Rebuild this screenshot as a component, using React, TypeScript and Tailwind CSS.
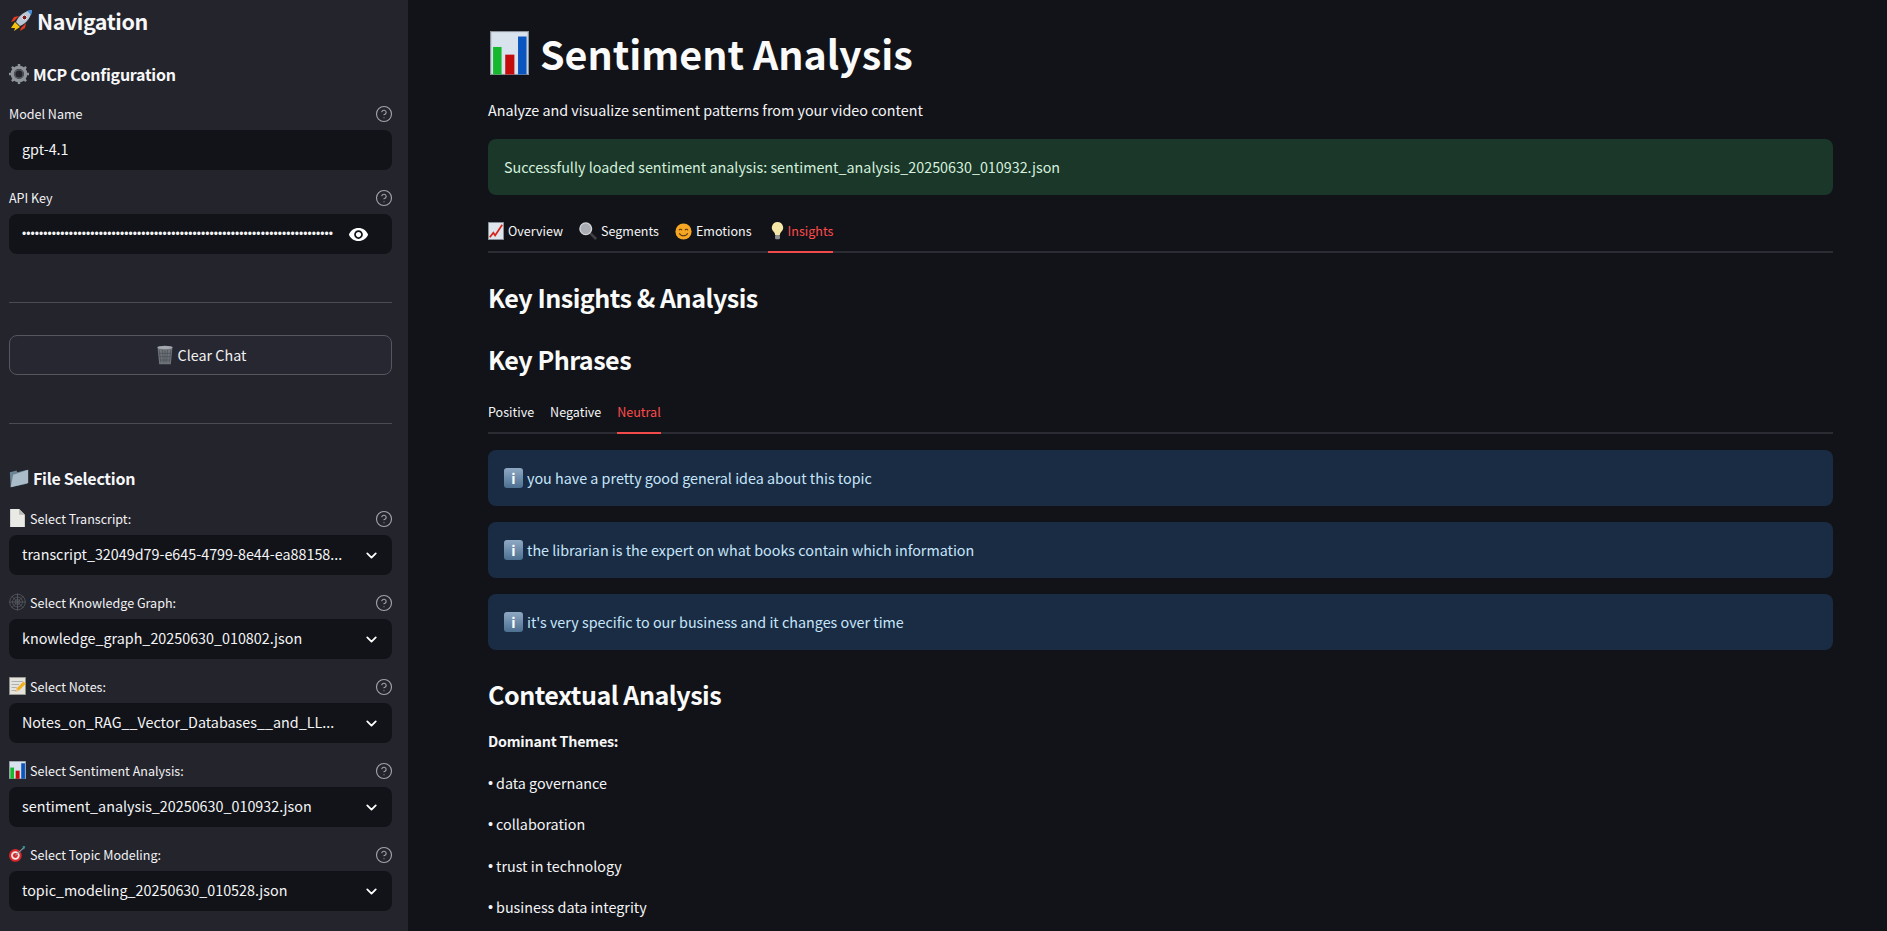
import { ChevronDown, CircleHelp } from "lucide-react";
import type { ReactNode } from "react";

// emoji are drawn by hand, the sandbox has no colour emoji font
function ChartIcon({ className }: { className: string }) {
  return (
    <svg viewBox="0 0 32 40" preserveAspectRatio="none" className={className}>
      <rect x="0.5" y="0.5" width="31" height="39" fill="#d9e3ee" stroke="#8b929b" />
      <rect x="2.500" y="14.500" width="7" height="25" fill="#16b82e" />
      <rect x="12.500" y="21.500" width="7.500" height="18" fill="#c40c0c" />
      <rect x="23" y="5" width="7" height="34.500" fill="#0b55c0" />
    </svg>
  );
}

function RocketIcon({ className }: { className: string }) {
  return (
    <svg viewBox="0 0 24 24" className={className}>
      <path d="M2 19l4-6 5 5-6 4 1-3z" fill="#f4c20d" />
      <path d="M5 12l-3 1 3-5 5-1zM12 19l-1 3 5-3 1-5z" fill="#e8381f" />
      <path d="M7 13C10 6 16 2 23 1c-1 7-5 13-12 16z" fill="#b9c6d6" />
      <path d="M18 1.800l5-.8-.8 5z" fill="#3f8fe0" />
      <circle cx="15.500" cy="8.500" r="2.400" fill="#7b1d1d" stroke="#dfe7ee" />
    </svg>
  );
}

function GearIcon({ className }: { className: string }) {
  return (
    <svg viewBox="0 0 24 24" className={className}>
      <circle cx="12" cy="12" r="8" fill="none" stroke="#8f949b" strokeWidth="4" />
      <g stroke="#8f949b" strokeWidth="3">
        <path d="M12 0v5M12 19v5M0 12h5M19 12h5M3.500 3.500l3.500 3.500M17 17l3.500 3.500M20.500 3.500L17 7M7 17l-3.500 3.500" />
      </g>
      <circle cx="12" cy="12" r="5" fill="none" stroke="#5a5e65" strokeWidth="1.500" />
    </svg>
  );
}

function TrashIcon({ className }: { className: string }) {
  return (
    <svg viewBox="0 0 20 24" className={className}>
      <path d="M1 2h18l-2 21H3z" fill="#6e737a" />
      <path d="M3 6l2 15M7 6l1 15M10 6v15M13 6l-1 15M17 6l-2 15M3 10h14M3.500 14h13M4 18h12" stroke="#4a4e55" strokeWidth="0.800" />
      <ellipse cx="10" cy="3" rx="9" ry="2" fill="#a5a9af" />
    </svg>
  );
}

function FolderIcon({ className }: { className: string }) {
  return (
    <svg viewBox="0 0 24 24" className={className}>
      <path d="M1 5l8-2 1 2 12-3v17L2 23z" fill="#6c8494" />
      <path d="M5 8l18-6v16L2 23z" fill="#a9bcc8" />
    </svg>
  );
}

function PageIcon({ className }: { className: string }) {
  return (
    <svg viewBox="0 0 20 22" className={className}>
      <path d="M1 0h11l7 7v15H1z" fill="#e9e9e6" />
      <path d="M12 0l7 7h-7z" fill="#b9bab6" />
    </svg>
  );
}

function WebIcon({ className }: { className: string }) {
  return (
    <svg viewBox="0 0 24 24" className={className} fill="none" stroke="#5e6168" strokeWidth="1">
      <path d="M12 0v24M0 12h24M3.500 3.500l17 17M20.500 3.500l-17 17" />
      <circle cx="12" cy="12" r="3.500" />
      <circle cx="12" cy="12" r="7" />
      <circle cx="12" cy="12" r="11" />
    </svg>
  );
}

function MemoIcon({ className }: { className: string }) {
  return (
    <svg viewBox="0 0 22 24" className={className}>
      <rect x="0.500" y="0.500" width="21" height="23" fill="#e4e4dc" stroke="#9a9a94" />
      <path d="M3 6h15M3 10h10M3 14h7M3 18h6" stroke="#9aa0a8" strokeWidth="1" />
      <path d="M8 20l2-5 9-9 3 3-9 9z" fill="#f2b01e" />
      <path d="M8 20l2-5 3 3z" fill="#e8c79c" />
    </svg>
  );
}

function DartIcon({ className }: { className: string }) {
  return (
    <svg viewBox="0 0 24 24" className={className}>
      <circle cx="9" cy="14" r="9" fill="#d8262c" />
      <circle cx="9" cy="14" r="6" fill="#f3e7e4" />
      <circle cx="9" cy="14" r="3.500" fill="#d8262c" />
      <path d="M9 14L21 3" stroke="#8aa0a8" strokeWidth="1.500" />
      <path d="M19 1l4 0-2 5z" fill="#3f9fa8" />
    </svg>
  );
}

function TrendIcon({ className }: { className: string }) {
  return (
    <svg viewBox="0 0 18 20" className={className}>
      <rect x="0.500" y="0.500" width="17" height="19" fill="#dfe5ec" stroke="#8b929b" />
      <path d="M2 17l4-5 2 3 8-12" fill="none" stroke="#d4261f" strokeWidth="2" />
    </svg>
  );
}

function SearchIcon({ className }: { className: string }) {
  return (
    <svg viewBox="0 0 20 20" className={className}>
      <path d="M11 11l8 8" stroke="#3d3f44" strokeWidth="3" />
      <circle cx="7.500" cy="7.500" r="6.500" fill="#a9adb3" stroke="#d3d5d8" strokeWidth="1.500" />
    </svg>
  );
}

function SmileIcon({ className }: { className: string }) {
  return (
    <svg viewBox="0 0 20 20" className={className}>
      <circle cx="10" cy="10" r="9.500" fill="#f5a623" />
      <path d="M4.800 8.500c.6-1.600 2.800-1.600 3.400 0M11.800 8.500c.6-1.600 2.800-1.600 3.400 0" fill="none" stroke="#5b3410" strokeWidth="1.200" />
      <path d="M5 12c2 4 8 4 10 0" fill="none" stroke="#5b3410" strokeWidth="1.200" />
    </svg>
  );
}

function BulbIcon({ className }: { className: string }) {
  return (
    <svg viewBox="0 0 16 22" className={className}>
      <path d="M8 0a7 7 0 0 1 4 12.700c-.8.800-1 1.800-1 3.300H5c0-1.500-.2-2.500-1-3.300A7 7 0 0 1 8 0z" fill="#f6e7a8" />
      <rect x="5" y="16" width="6" height="5" rx="1" fill="#8d8f92" />
    </svg>
  );
}

function EyeIcon() {
  return (
    <svg viewBox="0 0 24 24" className="h-[21px] w-[21px] shrink-0" fill="#ffffff">
      <path d="M12 4.500C7 4.500 2.730 7.610 1 12c1.730 4.390 6 7.500 11 7.500s9.270-3.110 11-7.500c-1.730-4.390-6-7.500-11-7.500zM12 17c-2.760 0-5-2.240-5-5s2.240-5 5-5 5 2.240 5 5-2.240 5-5 5zm0-8c-1.660 0-3 1.340-3 3s1.340 3 3 3 3-1.340 3-3-1.340-3-3-3z" />
    </svg>
  );
}

function InfoIcon() {
  return (
    <span className="flex h-[20px] w-[19px] shrink-0 items-center justify-center rounded-[3px] bg-gradient-to-b from-[#8fa9c4] to-[#4d7091] text-[14px] leading-none font-semibold text-white">
      i
    </span>
  );
}

const labelIcon = "w-[17px] h-[18px] shrink-0 -mt-[2px]";

const files = [
  { icon: <PageIcon className={labelIcon} />, label: "Select Transcript:", value: "transcript_32049d79-e645-4799-8e44-ea88158..." },
  { icon: <WebIcon className={labelIcon} />, label: "Select Knowledge Graph:", value: "knowledge_graph_20250630_010802.json" },
  { icon: <MemoIcon className={labelIcon} />, label: "Select Notes:", value: "Notes_on_RAG__Vector_Databases__and_LL..." },
  { icon: <ChartIcon className={labelIcon} />, label: "Select Sentiment Analysis:", value: "sentiment_analysis_20250630_010932.json" },
  { icon: <DartIcon className={labelIcon} />, label: "Select Topic Modeling:", value: "topic_modeling_20250630_010528.json" },
];

const tabs = [
  { icon: <TrendIcon className="w-[16px] h-[18px]" />, label: "Overview" },
  { icon: <SearchIcon className="w-[18px] h-[18px]" />, label: "Segments" },
  { icon: <SmileIcon className="w-[17px] h-[17px]" />, label: "Emotions" },
  { icon: <BulbIcon className="ml-[3px] w-[13px] h-[18px]" />, label: "Insights", active: true },
];

const phrases = [
  "you have a pretty good general idea about this topic",
  "the librarian is the expert on what books contain which information",
  "it's very specific to our business and it changes over time",
];

const themes = ["data governance", "collaboration", "trust in technology", "business data integrity"];

function FieldLabel({ children }: { children: ReactNode }) {
  return (
    <div className="flex h-[20px] items-center justify-between pt-[2px] text-[12.540px] text-[#f2f2f4]">
      <div className="flex items-center gap-[4px]">{children}</div>
      <CircleHelp className="-mr-[1px] h-[18px] w-[18px] text-[#a3a5ab]" strokeWidth={1.5} />
    </div>
  );
}

function SelectBox({ value }: { value: string }) {
  return (
    <div className="mt-[7px] flex h-[40px] items-center justify-between rounded-lg bg-[#111318] pr-[12px] pb-[2px] pl-[13px] text-[14.340px] text-[#f5f5f7]">
      <span className="truncate">{value}</span>
      <ChevronDown className="mt-[2px] h-[17px] w-[17px] shrink-0 text-white" strokeWidth={2.5} />
    </div>
  );
}

function Sidebar() {
  return (
    <aside className="h-full w-[408px] shrink-0 overflow-hidden bg-[#23242c] pr-[16px] pl-[9px]">
      <h2 className="mt-[5px] flex h-[32px] items-center gap-[4px] text-[21.500px] font-bold tracking-[-0.45px] text-[#f7f7f9]">
        <RocketIcon className="h-[24px] w-[24px]" />
        Navigation
      </h2>
      <h3 className="mt-[21px] flex h-[32px] items-center gap-[4px] text-[16px] font-bold tracking-[-0.27px] text-[#f7f7f9]">
        <GearIcon className="h-[20px] w-[20px]" />
        MCP Configuration
      </h3>
      <div className="mt-[13px]">
        <FieldLabel>Model Name</FieldLabel>
        <div className="mt-[7px] flex h-[40px] items-center rounded-lg bg-[#111318] px-[13px] pb-[2px] text-[14.340px] text-[#f5f5f7]">
          gpt-4.1
        </div>
      </div>
      <div className="mt-[17px]">
        <FieldLabel>API Key</FieldLabel>
        <div className="mt-[7px] flex h-[40px] items-center justify-between rounded-lg bg-[#111318] pr-[23px] pl-[13px] text-[#f5f5f7]">
          <span className="[font-family:'Liberation_Sans',sans-serif] text-[12px] leading-none tracking-[0.06px] whitespace-nowrap">{"•".repeat(73)}</span>
          <EyeIcon />
        </div>
      </div>
      <hr className="mt-[48px] border-[#4a4b53]" />
      <button className="mt-[32px] flex h-[40px] w-full items-center justify-center gap-[3px] rounded-lg border border-[#55565e] bg-[#262730] text-[14.340px] text-[#f2f2f4]">
        <TrashIcon className="h-[20px] w-[20px]" />
        Clear Chat
      </button>
      <hr className="mt-[48px] border-[#4a4b53]" />
      <h3 className="mt-[38px] flex h-[32px] items-center gap-[4px] text-[16px] font-bold tracking-[-0.27px] text-[#f7f7f9]">
        <FolderIcon className="h-[20px] w-[20px]" />
        File Selection
      </h3>
      <div className="mt-[14px] flex flex-col gap-[17px]">
        {files.map((f) => (
          <div key={f.label}>
            <FieldLabel>
              {f.icon}
              {f.label}
            </FieldLabel>
            <SelectBox value={f.value} />
          </div>
        ))}
      </div>
    </aside>
  );
}

function Alert({ className, children }: { className: string; children: ReactNode }) {
  return <div className={`flex h-[56px] items-center gap-[4px] rounded-lg px-[16px] text-[14.340px] ${className}`}>{children}</div>;
}

function Main() {
  return (
    <main className="h-full min-w-0 flex-1 overflow-hidden pr-[54px] pl-[80px] text-[#f5f5f7]">
      <h1 className="mt-[26px] flex h-[54px] items-center gap-[11px] text-[39.400px] font-bold text-[#fafafa]">
        <ChartIcon className="ml-[2px] h-[44px] w-[39px]" />
        Sentiment Analysis
      </h1>
      <p className="mt-[17px] h-[26px] text-[14.340px] leading-[26px]">Analyze and visualize sentiment patterns from your video content</p>
      <Alert className="mt-[16px] bg-[#1a3729] pb-[1px] text-[#d5f0dd]">Successfully loaded sentiment analysis: sentiment_analysis_20250630_010932.json</Alert>

      {/* main tabs */}
      <div className="mt-[16px] flex h-[42px] gap-[16px] border-b-2 border-[#2a2b33]">
        {tabs.map((t) => (
          <div
            key={t.label}
            className={`-mb-[2px] flex items-center gap-[4px] border-b-2 text-[12.540px] ${t.active ? "border-[#f04a4a] text-[#ff4b4b]" : "border-transparent"}`}
          >
            {t.icon}
            {t.label}
          </div>
        ))}
      </div>

      <h2 className="mt-[24px] h-[40px] text-[25.100px] leading-[40px] font-semibold tracking-[-0.5px] text-[#fafafa]">Key Insights &amp; Analysis</h2>
      <h2 className="mt-[22px] h-[40px] text-[25.100px] leading-[40px] font-semibold tracking-[-0.5px] text-[#fafafa]">Key Phrases</h2>

      <div className="mt-[15px] flex h-[40px] gap-[16px] border-b-2 border-[#2a2b33]">
        {["Positive", "Negative", "Neutral"].map((t) => (
          <div
            key={t}
            className={`-mb-[2px] flex items-center border-b-2 pb-[2px] text-[12.540px] ${t === "Neutral" ? "border-[#f04a4a] text-[#ff4b4b]" : "border-transparent"}`}
          >
            {t}
          </div>
        ))}
      </div>

      <div className="mt-[16px] flex flex-col gap-[16px]">
        {phrases.map((p) => (
          <Alert key={p} className="bg-[#1a2c44] text-[#c7e6fb]">
            <InfoIcon />
            {p}
          </Alert>
        ))}
      </div>

      <h2 className="mt-[24px] h-[40px] text-[25.100px] leading-[40px] font-semibold tracking-[-0.5px] text-[#fafafa]">Contextual Analysis</h2>
      <p className="mt-[14px] h-[26px] text-[14.340px] leading-[26px] font-bold tracking-[-0.22px]">Dominant Themes:</p>
      {themes.map((t) => (
        <p key={t} className="mt-[15.600px] flex h-[26px] items-center gap-[3px] text-[14.340px] leading-[26px]">
          <span className="[font-family:'Liberation_Sans',sans-serif]">•</span>
          {t}
        </p>
      ))}
    </main>
  );
}

export default function App() {
  return (
    <div className="flex h-[931px] overflow-hidden bg-[#111318] [font-family:'Noto_Sans_CJK_SC','Noto_Sans',sans-serif]">
      <Sidebar />
      <Main />
    </div>
  );
}
